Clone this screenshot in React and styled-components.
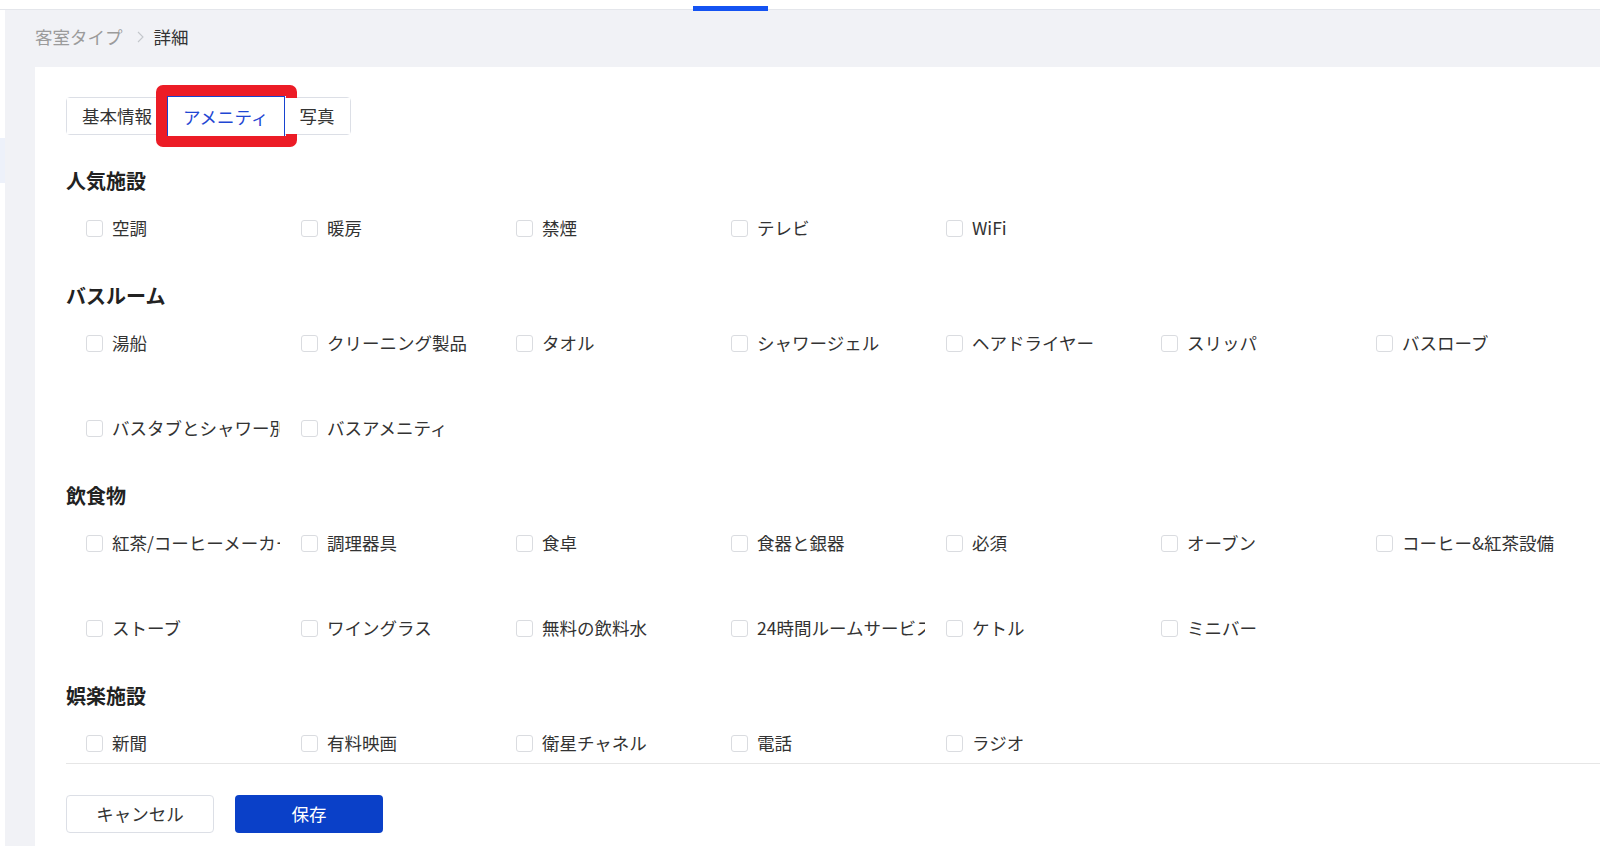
import React from 'react';
import styled, { createGlobalStyle } from 'styled-components';

const GlobalStyle = createGlobalStyle`
  html, body { margin: 0; padding: 0; height: 100%; overflow: hidden; background: #fff; }
  body { font-family: "Noto Sans CJK JP", "Noto Sans", sans-serif; color: #333; }
  #root { height: 846px; }
  * { box-sizing: border-box; }
`;

const Page = styled.div`
  height: 846px;
  display: flex;
  flex-direction: column;
  background: #fff;
  overflow: hidden;
`;

const TopBar = styled.header`
  position: relative;
  z-index: 2;
  flex: none;
  height: 10px;
  border-bottom: 1px solid #e4e6eb;
  background: #fff;
  display: flex;
  align-items: flex-start;
  padding-left: 693px;
`;

const ActiveIndicator = styled.span`
  display: block;
  flex: none;
  width: 75px;
  height: 5px;
  margin-top: 6px;
  background: #1453f2;
`;

const Body = styled.div`
  flex: 1;
  display: flex;
  min-height: 0;
`;

const SideStrip = styled.aside`
  flex: none;
  width: 5px;
  background: #fff;
  padding-top: 128px;
`;

const SideItem = styled.div`
  height: 45px;
  background: #edf1fa;
`;

const Main = styled.main`
  flex: 1;
  min-width: 0;
  display: flex;
  flex-direction: column;
  background: #f1f2f6;
  padding-left: 30px;
`;

const Breadcrumb = styled.nav`
  flex: none;
  height: 57px;
  display: flex;
  align-items: center;
  padding-bottom: 3px;
  font-size: 17.5px;
  line-height: 24px;
`;

const Crumb = styled.span`
  color: ${(p) => (p.$current ? '#333' : '#9b9b9b')};
`;

const Separator = styled.svg`
  width: 7px;
  height: 12px;
  margin: 0 10px 0 14px;
  flex: none;
`;

const Card = styled.section`
  flex: 1;
  display: flex;
  flex-direction: column;
  background: #fff;
  padding: 30px 0 0 31px;
`;

const TabGroup = styled.div`
  align-self: flex-start;
  display: flex;
  height: 38px;
  border: 1px solid #dcdfe6;
  border-radius: 4px;
`;

const Tab = styled.button`
  position: relative;
  height: ${(p) => (p.$active ? '41px' : '36px')};
  margin: ${(p) => (p.$active ? '-2px 0 -3px' : '0')};
  padding: 0 15px;
  border: ${(p) => (p.$active ? '1px solid #1743cf' : 'none')};
  background: #fff;
  font-family: inherit;
  font-size: 17.5px;
  line-height: 24px;
  color: ${(p) => (p.$active ? '#1f47d3' : '#333')};
  cursor: pointer;

  ${(p) =>
    p.$active &&
    `
    &::after {
      content: '';
      position: absolute;
      top: -12px;
      left: -12px;
      right: -13px;
      bottom: -11px;
      border: 11px solid #ec1c26;
      border-radius: 7px;
      pointer-events: none;
    }
  `}
`;

const Sections = styled.div`
  margin-top: 32px;
  display: flex;
  flex-direction: column;
  gap: 40px;
`;

const Section = styled.div`
  display: flex;
  flex-direction: column;
  gap: 19px;
`;

const SectionTitle = styled.h3`
  margin: 0;
  font-size: 20px;
  line-height: 28px;
  font-weight: 700;
  color: #222;
`;

const Grid = styled.div`
  display: grid;
  grid-template-columns: repeat(7, 215px);
  row-gap: 57px;
  padding-left: 20px;
`;

const Item = styled.label`
  display: flex;
  align-items: center;
  gap: 9px;
  height: 28px;
  cursor: pointer;
`;

const Box = styled.span`
  flex: none;
  width: 17px;
  height: 17px;
  border: 1px solid #dadce0;
  border-radius: 3px;
  background: #fff;
`;

const Label = styled.span`
  max-width: 168px;
  overflow: hidden;
  white-space: nowrap;
  font-size: 17.5px;
  line-height: 28px;
  color: #333;
`;

const Footer = styled.div`
  margin-top: 6px;
  border-top: 1px solid #e6e6e6;
  padding-top: 31px;
  display: flex;
  gap: 21px;
`;

const Button = styled.button`
  width: 148px;
  height: 38px;
  border-radius: 4px;
  font-family: inherit;
  font-size: 17.5px;
  line-height: 24px;
  cursor: pointer;
  border: ${(p) => (p.$primary ? 'none' : '1px solid #dcdfe6')};
  background: ${(p) => (p.$primary ? '#0a40c8' : '#fff')};
  color: ${(p) => (p.$primary ? '#fff' : '#333')};
`;

const sections = [
  { title: '人気施設', items: ['空調', '暖房', '禁煙', 'テレビ', 'WiFi'] },
  {
    title: 'バスルーム',
    items: ['湯船', 'クリーニング製品', 'タオル', 'シャワージェル', 'ヘアドライヤー', 'スリッパ', 'バスローブ', 'バスタブとシャワー別々', 'バスアメニティ'],
  },
  {
    title: '飲食物',
    items: [
      '紅茶/コーヒーメーカー', '調理器具', '食卓', '食器と銀器', '必須', 'オーブン', 'コーヒー&紅茶設備',
      'ストーブ', 'ワイングラス', '無料の飲料水', '24時間ルームサービス', 'ケトル', 'ミニバー',
    ],
  },
  { title: '娯楽施設', items: ['新聞', '有料映画', '衛星チャネル', '電話', 'ラジオ'] },
];

const tabs = ['基本情報', 'アメニティ', '写真'];

export default function App() {
  return (
    <Page>
      <GlobalStyle />
      <TopBar>
        <ActiveIndicator />
      </TopBar>
      <Body>
        <SideStrip>
          <SideItem />
        </SideStrip>
        <Main>
          <Breadcrumb>
            <Crumb>客室タイプ</Crumb>
            <Separator viewBox="0 0 7 12" fill="none">
              <path d="M1 1l5 5-5 5" stroke="#c4c7cc" strokeWidth="1.1" />
            </Separator>
            <Crumb $current>詳細</Crumb>
          </Breadcrumb>
          <Card>
            <TabGroup>
              {tabs.map((t) => (
                <Tab key={t} $active={t === 'アメニティ'}>
                  {t}
                </Tab>
              ))}
            </TabGroup>
            <Sections>
              {sections.map((s) => (
                <Section key={s.title}>
                  <SectionTitle>{s.title}</SectionTitle>
                  <Grid>
                    {s.items.map((it) => (
                      <Item key={it} title={it}>
                        <Box />
                        <Label>{it}</Label>
                      </Item>
                    ))}
                  </Grid>
                </Section>
              ))}
            </Sections>
            <Footer>
              <Button>キャンセル</Button>
              <Button $primary>保存</Button>
            </Footer>
          </Card>
        </Main>
      </Body>
    </Page>
  );
}
